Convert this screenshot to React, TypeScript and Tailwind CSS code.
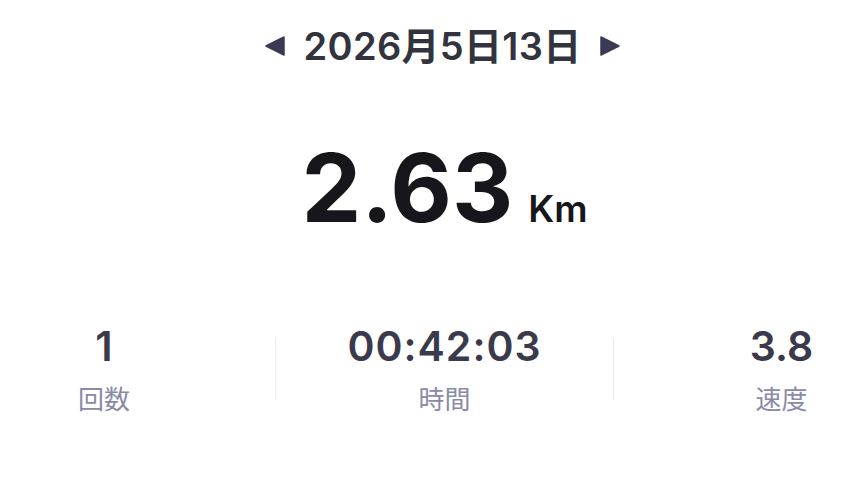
import { useState } from "react";

const FONT = { fontFamily: 'Inter, "Noto Sans CJK JP", sans-serif' };

const STATS = [
  { value: "1", label: "回数" },
  { value: "00:42:03", label: "時間" },
  { value: "3.8", label: "速度" },
];

const Triangle = ({ dir }: { dir: "left" | "right" }) => (
  <svg width="22" height="22" viewBox="0 0 22 22" className="block h-[22px] w-[22px] shrink-0 text-[#3a3a55]">
    {dir === "left" ? (
      <path d="M20 2 L20 20 L2 11 Z" fill="currentColor" stroke="currentColor" strokeWidth="1.5" strokeLinejoin="round" />
    ) : (
      <path d="M2 2 L2 20 L20 11 Z" fill="currentColor" stroke="currentColor" strokeWidth="1.5" strokeLinejoin="round" />
    )}
  </svg>
);

export default function App() {
  const [date] = useState("2026月5日13日");

  return (
    <main className="h-[490px] w-[855px] overflow-hidden bg-white" style={FONT}>
      <header className="flex items-center justify-center gap-[18px] pt-[22px] pl-[30px]">
        <Triangle dir="left" />
        <h1 className="text-[38px] leading-[48px] font-semibold tracking-[0.3px] text-[#33333d]">{date}</h1>
        <Triangle dir="right" />
      </header>

      <section className="mt-[68px] flex items-baseline justify-center gap-[15px] pl-[34px]">
        <span className="text-[95px] leading-[100px] font-bold text-[#16161c]">2.63</span>
        <span className="text-[37px] leading-none font-semibold text-[#16161c]">Km</span>
      </section>

      <section className="mt-[84px] flex items-center">
        <div className="flex w-[208px] flex-col items-center">
          <p className="text-[41px] leading-[48px] font-semibold text-[#3a3a4c]">{STATS[0].value}</p>
          <p className="mt-[15px] text-[26px] leading-[30px] text-[#8a8aa8]">{STATS[0].label}</p>
        </div>
        <div className="ml-[67px] h-[62px] w-px bg-[#ececf0]" />
        <div className="flex w-[337px] flex-col items-center">
          <p className="text-[41px] leading-[48px] font-semibold tracking-[1px] text-[#3a3a4c]">{STATS[1].value}</p>
          <p className="mt-[15px] text-[26px] leading-[30px] text-[#8a8aa8]">{STATS[1].label}</p>
        </div>
        <div className="h-[62px] w-px bg-[#ececf0]" />
        <div className="flex flex-1 flex-col items-center pl-[94px]">
          <p className="text-[41px] leading-[48px] font-semibold text-[#3a3a4c]">{STATS[2].value}</p>
          <p className="mt-[15px] text-[26px] leading-[30px] text-[#8a8aa8]">{STATS[2].label}</p>
        </div>
      </section>
    </main>
  );
}
